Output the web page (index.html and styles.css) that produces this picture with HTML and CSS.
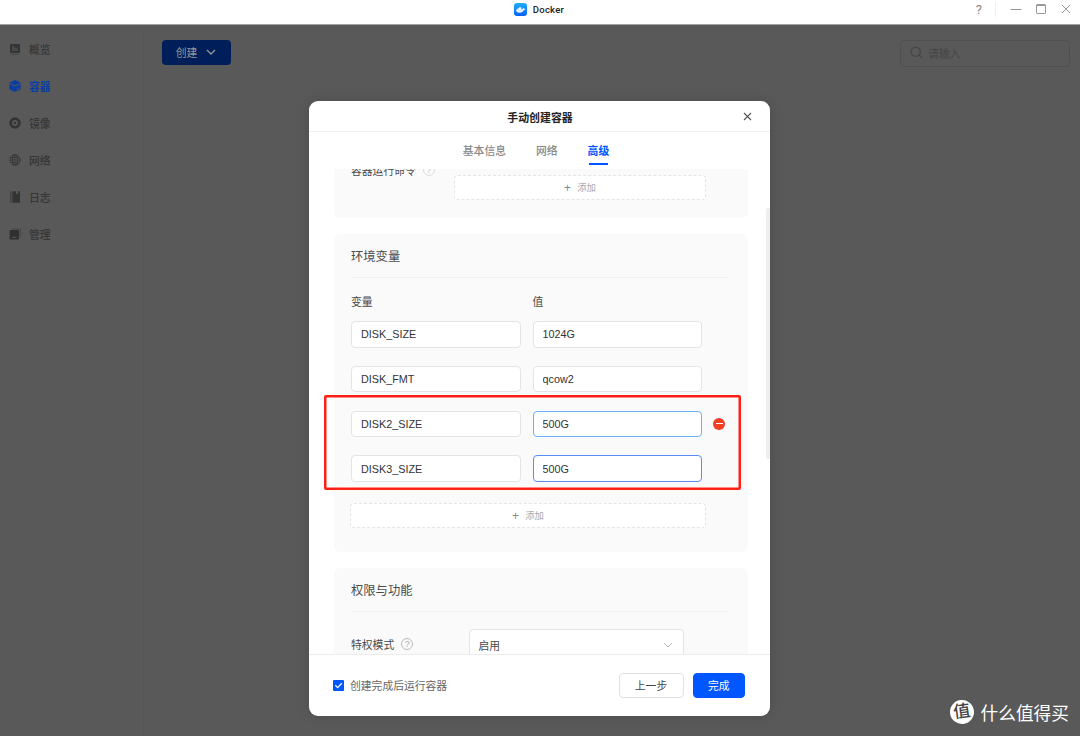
FILE: index.html
```html
<!DOCTYPE html>
<html lang="zh-CN">
<head>
    <meta charset="UTF-8">
    <meta name="viewport" content="width=device-width, initial-scale=1.0">
    <title>Docker</title>
    <link rel="stylesheet" href="styles.css">
</head>
<body>
    <header class="titlebar">
        <div class="app-name">
            <svg width="13" height="13" viewBox="0 0 13 13">
                <defs>
                    <linearGradient id="logoFill" x1="0" y1="0" x2="0" y2="1">
                        <stop offset="0" stop-color="#1cb0f8"/>
                        <stop offset="1" stop-color="#0560ff"/>
                    </linearGradient>
                </defs>
                <rect width="13" height="13" rx="3" fill="url(#logoFill)"/>
                <path d="M2 6.500h1.500V5.300h1.400V4.300h2.400v1.900h1.300c0-.7.300-1.200.7-1.500.5.400.7.800.7 1.200.5-.1 1 0 1.300.3-.3.700-.9.900-1.500.9C9.200 9 7.700 9.800 5.700 9.800 3.300 9.800 2 8.600 2 6.500z" fill="#e8f4ff"/>
            </svg>
            <span>Docker</span>
        </div>
        <div class="window-tools">
            <span class="help">?</span>
            <i class="split"></i>
            <svg width="12" height="12" viewBox="0 0 12 12"><path d="M.5 6.500h11"/></svg>
            <svg width="12" height="12" viewBox="0 0 12 12"><rect x="1.500" y="1.500" width="9" height="9" rx=".6"/><path d="M1.500 2.500h9"/></svg>
            <svg width="12" height="12" viewBox="0 0 12 12"><path d="M2 2l8 8M10 2l-8 8"/></svg>
        </div>
    </header>

    <div class="layout">
        <nav class="sidebar">
            <a class="nav-item">
                <svg width="12" height="12" viewBox="0 0 12 12"><rect x="1" y="1" width="10" height="9" rx="1" fill="#343434"/><path d="M2 11.300h8" stroke="#454545"/><path d="M4 3v5M6 4.500v3.500M8 5.500v2.500" stroke="#5c5c5c" stroke-width="1.100"/></svg>
                <span>概览</span>
            </a>
            <a class="nav-item active">
                <svg width="12" height="12" viewBox="0 0 12 12"><path d="M6 0l5.600 2.700v6.500L6 12 .4 9.200V2.700z" fill="#0b3da3"/><path d="M.8 3.500L6 6l5.200-2.500M7.500 9.700l2.300-1.200" fill="none" stroke="#595959"/></svg>
                <span>容器</span>
            </a>
            <a class="nav-item">
                <svg width="12" height="12" viewBox="0 0 12 12"><circle cx="6" cy="6" r="4.300" fill="none" stroke="#343434" stroke-width="2.800"/><circle cx="6" cy="6" r="1.200" fill="#343434"/></svg>
                <span>镜像</span>
            </a>
            <a class="nav-item">
                <svg width="12" height="12" viewBox="0 0 12 12" fill="none" stroke="#383838"><circle cx="6" cy="6" r="5.200" stroke-dasharray="3.600 .5"/><ellipse cx="6" cy="6" rx="2.500" ry="5.200"/><path d="M.8 6h10.400M1.600 3.500h8.800M1.600 8.500h8.800M6 1v10" stroke-width=".8"/></svg>
                <span>网络</span>
            </a>
            <a class="nav-item">
                <svg width="12" height="12" viewBox="0 0 12 12"><path d="M1 .7h1.500v11H1z" fill="#424242"/><path d="M3.400.3H11v11.500H3.400z" fill="#343434"/><path d="M7 .3h2v2.800l-1-.7-1 .7z" fill="#595959"/></svg>
                <span>日志</span>
            </a>
            <a class="nav-item">
                <svg width="12" height="12" viewBox="0 0 12 12"><path d="M3 1h8.500v8.500" fill="none" stroke="#474747" stroke-width="1.200"/><rect x=".6" y="2" width="9.400" height="9.500" rx="1" fill="#303030"/><path d="M3 9.300h4.500" stroke="#595959"/></svg>
                <span>管理</span>
            </a>
        </nav>

        <main class="content">
            <button class="create">创建
                <svg width="10" height="6" viewBox="0 0 10 6"><path d="M1 1l4 4 4-4" fill="none" stroke="#999" stroke-width="1.300"/></svg>
            </button>
            <div class="search">
                <svg width="13" height="13" viewBox="0 0 13 13" fill="none" stroke="#434343" stroke-width="1.100"><circle cx="5.700" cy="5.700" r="4.600"/><path d="M9 9l3 3"/></svg>
                <span>请输入</span>
            </div>
        </main>
    </div>

    <div class="modal">
        <div class="modal-header">
            <h1>手动创建容器</h1>
            <svg class="close" width="9" height="9" viewBox="0 0 9 9"><path d="M1 1l7 7M8 1l-7 7" stroke="#555" stroke-width="1.100"/></svg>
        </div>
        <div class="tabs">
            <span class="tab">基本信息</span>
            <span class="tab">网络</span>
            <span class="tab active">高级</span>
        </div>

        <div class="modal-body">
            <section class="card command">
                <label>容器运行命令 <i class="tip">?</i></label>
                <div class="add"><b>+</b><span>添加</span></div>
            </section>

            <section class="card env">
                <h2>环境变量</h2>
                <div class="env-grid">
                    <span class="col-title">变量</span>
                    <span class="col-title">值</span>
                    <input type="text" value="DISK_SIZE">
                    <input type="text" value="1024G">
                    <input type="text" value="DISK_FMT">
                    <input type="text" value="qcow2">
                    <input type="text" value="DISK2_SIZE">
                    <input type="text" class="hovered" value="500G">
                    <i class="remove"></i>
                    <input type="text" value="DISK3_SIZE">
                    <input type="text" class="focused" value="500G">
                </div>
                <div class="add"><b>+</b><span>添加</span></div>
                <div class="highlight"></div>
            </section>

            <section class="card rights">
                <h2>权限与功能</h2>
                <div class="row">
                    <label>特权模式 <i class="tip">?</i></label>
                    <div class="select">启用
                        <svg width="10" height="6" viewBox="0 0 10 6"><path d="M1 1l4 4 4-4" fill="none" stroke="#b5b5b5"/></svg>
                    </div>
                </div>
            </section>
            <div class="scrollbar"></div>
        </div>

        <div class="modal-footer">
            <div class="run-after">
                <svg width="11" height="11" viewBox="0 0 11 11"><rect width="11" height="11" rx="1" fill="#0056ff"/><path d="M2.300 5.300l2.300 2.300 4.200-4.300" fill="none" stroke="#fff" stroke-width="1.300"/></svg>
                <span>创建完成后运行容器</span>
            </div>
            <button class="btn">上一步</button>
            <button class="btn primary">完成</button>
        </div>
    </div>

    <div class="watermark">
        <span class="mark">值</span>
        <span>什么值得买</span>
    </div>
</body>
</html>
```
FILE: styles.css
```css
* {
    box-sizing: border-box;
}

body {
    margin: 0;
    height: 736px;
    overflow: hidden;
    background-color: #595959;
    font-family: "Liberation Sans", "Noto Sans CJK SC", sans-serif;
    font-size: 10.8px;
    color: #4a4a4a;
}

i {
    font-style: normal;
}

svg {
    display: block;
    flex-shrink: 0;
}

button {
    font-family: inherit;
    font-size: inherit;
    padding: 0;
}

/* title bar */
.titlebar {
    position: relative;
    display: flex;
    justify-content: center;
    height: 25px;
    background-color: white;
    border-bottom: 1px solid #a0a2a0;
}

.app-name {
    display: flex;
    align-items: center;
    gap: 6px;
    height: 19px;
    padding-right: 2px;
    font-family: Roboto, sans-serif;
    font-size: 9.5px;
    font-weight: 500;
    letter-spacing: 0.25px;
    color: #222;
}

.window-tools {
    position: absolute;
    right: 8px;
    top: 0;
    display: flex;
    align-items: center;
    gap: 13px;
    height: 18px;
}

.window-tools svg {
    fill: none;
    stroke: #999;
}

.window-tools .help {
    font-family: Roboto, sans-serif;
    font-size: 13px;
    color: #888;
}

.window-tools .split {
    width: 1px;
    height: 15px;
    margin-right: 1px;
    background-color: #f0f0f0;
}

/* page behind the dialog */
.layout {
    display: flex;
    height: 711px;
}

.sidebar {
    width: 144px;
    margin-top: 5px;
    padding-left: 9px;
    border-right: 1px solid #565656;
}

.nav-item {
    display: flex;
    align-items: center;
    gap: 8px;
    height: 37px;
    font-weight: 500;
    color: #363636;
}

.nav-item.active {
    font-weight: bold;
    color: #0b3da3;
}

.content {
    flex: 1;
    display: flex;
    justify-content: space-between;
    padding: 15px 10px 0 18px;
}

.create {
    display: flex;
    align-items: center;
    justify-content: center;
    gap: 9px;
    width: 69px;
    height: 25px;
    padding: 0 1px 1px 0;
    border: none;
    border-radius: 4px;
    background-color: #001e59;
    color: #999;
}

.search {
    display: flex;
    align-items: center;
    gap: 5px;
    width: 170px;
    height: 27px;
    padding: 0 0 2px 9px;
    border: 1px solid #505050;
    border-radius: 4px;
    color: #454545;
}

/* dialog */
.modal {
    position: absolute;
    left: 309px;
    top: 101px;
    display: flex;
    flex-direction: column;
    width: 461px;
    height: 615px;
    border-radius: 9px;
    overflow: hidden;
    background-color: white;
    box-shadow: 0 0 12px rgba(0, 0, 0, 0.15);
}

.modal-header {
    display: flex;
    align-items: center;
    height: 31px;
    padding: 1px 18px 0 37px;
    border-bottom: 1px solid #f0f0f0;
}

.modal-header h1 {
    flex: 1;
    margin: 0;
    padding-right: 9px;
    text-align: center;
    font-size: 10.9px;
    color: #222;
}

.tabs {
    display: flex;
    justify-content: center;
    gap: 30px;
    height: 37px;
    padding-right: 7px;
}

.tab {
    display: flex;
    flex-direction: column;
    align-items: center;
    line-height: 16px;
    padding-top: 11px;
    font-weight: 500;
    color: #888;
}

.tab.active {
    font-weight: bold;
    color: #0056ff;
}

.tab.active::after {
    content: "";
    width: 19px;
    height: 2px;
    margin-top: 4px;
    background-color: #0056ff;
}

.modal-body {
    position: relative;
    height: 485px;
    overflow: hidden;
    padding-left: 24.5px;
}

.card {
    position: relative;
    width: 414px;
    margin-bottom: 16px;
    border-radius: 6px;
    background-color: #fafafa;
}

.card h2 {
    margin: 0 20px 0 17.5px;
    height: 44px;
    padding-top: 1px;
    line-height: 44px;
    border-bottom: 1px solid #f0f0f0;
    font-size: 12.3px;
    font-weight: normal;
}

.card label {
    display: flex;
    align-items: center;
    gap: 7px;
    height: 16px;
}

.tip {
    width: 12px;
    height: 12px;
    border: 1px solid #bbb;
    border-radius: 50%;
    line-height: 10.5px;
    text-align: center;
    font-size: 9px;
    color: #aaa;
}

.add {
    display: flex;
    align-items: center;
    justify-content: center;
    gap: 6px;
    height: 25px;
    border: 1px dashed #e4e4e4;
    border-radius: 4px;
    background-color: white;
    font-size: 9.4px;
    color: #aaa;
}

.add span {
    margin-top: -1px;
}

.add b {
    font-size: 12px;
    font-weight: normal;
    color: #888;
}

.command {
    display: flex;
    height: 49px;
    padding-left: 17.5px;
    border-radius: 0 0 6px 6px;
}

.command label {
    width: 103px;
    margin-top: -7px;
}

.command .tip {
    border-color: #ddd;
    color: #ccc;
}

.command .add {
    width: 252px;
    margin-top: 6px;
}

.env {
    height: 318px;
}

.env-grid {
    display: grid;
    grid-template-columns: 169.5px 169.5px 14px;
    grid-template-rows: 25px;
    grid-auto-rows: 26.5px;
    column-gap: 12px;
    row-gap: 18.2px;
    padding: 0 17.5px;
    align-items: center;
    height: 205px;
}

.env-grid input:nth-of-type(odd) {
    grid-column: 1;
}

.col-title {
    padding-top: 24px;
    line-height: 1;
}

.env-grid input {
    width: 100%;
    height: 26.5px;
    padding: 0 9px;
    border: 1px solid #e4e4e4;
    border-radius: 4px;
    background-color: white;
    font-family: "Liberation Sans", sans-serif;
    font-size: 10.8px;
    color: #333;
}

.env-grid input.hovered {
    border-color: #6bb2fa;
}

.env-grid input.focused {
    border-color: #5a8cf5;
}

.remove {
    display: flex;
    align-items: center;
    justify-content: center;
    width: 12px;
    height: 12px;
    margin-left: -1px;
    border-radius: 50%;
    background-color: #f03e23;
}

.remove::before {
    content: "";
    width: 7px;
    height: 1px;
    background-color: white;
}

.env .add {
    width: 356px;
    margin: 20px 0 0 16.500px;
}

.highlight {
    position: absolute;
    left: -9.5px;
    top: 161px;
    width: 417px;
    height: 95px;
    border: 2px solid #ff2015;
    border-radius: 2px;
    box-shadow: inset 0 0 0 0.5px #ff2015;
    pointer-events: none;
}

.rights {
    height: 120px;
}

.row {
    display: flex;
    padding: 17px 0 0 17.5px;
}

.row label {
    width: 117.5px;
    margin-top: 7px;
}

.select {
    display: flex;
    align-items: center;
    justify-content: space-between;
    width: 215px;
    height: 32px;
    padding: 0 10px 1px 9px;
    border: 1px solid #e4e4e4;
    border-radius: 4px;
    background-color: white;
}

.scrollbar {
    position: absolute;
    right: 0;
    top: 39px;
    width: 4px;
    height: 251px;
    border-radius: 2px 0 0 2px;
    background-color: #efefef;
}

.modal-footer {
    display: flex;
    align-items: center;
    gap: 9px;
    height: 62px;
    padding: 0 25px 0 24px;
    border-top: 1px solid #ececec;
}

.run-after {
    flex: 1;
    display: flex;
    align-items: center;
    gap: 6px;
    color: #666;
}

.run-after span {
    margin-top: -1px;
}

.btn {
    width: 65px;
    height: 25px;
    padding-bottom: 2px;
    border: 1px solid #e2e2e2;
    border-radius: 4px;
    background-color: white;
    color: #444;
}

.btn.primary {
    width: 52.5px;
    border-color: #0056ff;
    background-color: #0056ff;
    color: white;
}

.watermark {
    position: absolute;
    right: 11px;
    bottom: 12px;
    display: flex;
    align-items: center;
    gap: 7px;
    height: 24px;
    font-size: 17.7px;
    color: white;
}

.watermark .mark {
    width: 24px;
    height: 24px;
    border-radius: 50%;
    background-color: white;
    line-height: 23px;
    text-align: center;
    font-size: 17px;
    font-weight: 500;
    color: #444;
    transform: rotate(-8deg);
}
```
